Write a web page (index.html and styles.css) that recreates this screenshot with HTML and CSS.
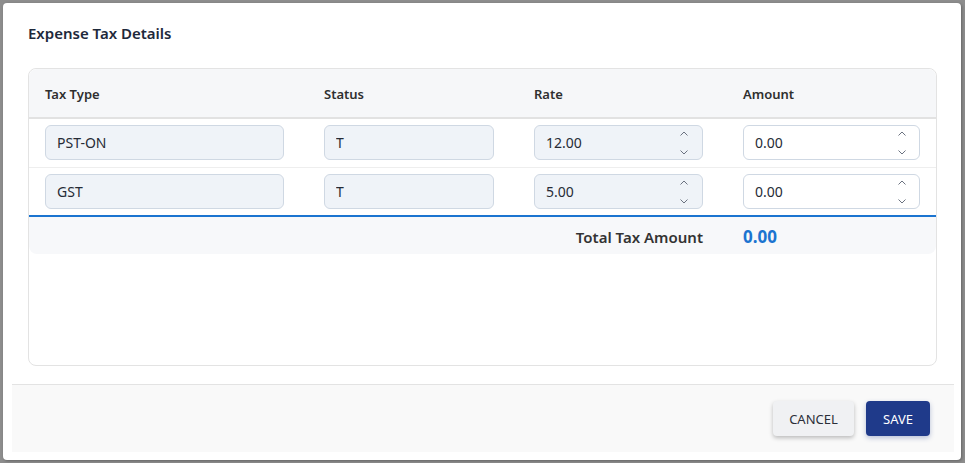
FILE: index.html
```html
<!DOCTYPE html>
<html lang="en">
<head>
  <meta charset="UTF-8" />
  <title>Expense Tax Details</title>
  <link rel="stylesheet" href="styles.css">
</head>
<body>

  <div class="dialogo">
    <h2 class="titulo">Expense Tax Details</h2>

    <div class="cartao">
      <div class="linha cabecalho">
        <div class="cel">Tax Type</div>
        <div class="cel">Status</div>
        <div class="cel">Rate</div>
        <div class="cel">Amount</div>
      </div>

      <div class="linha">
        <div class="cel"><input class="campo bloqueado" value="PST-ON" readonly></div>
        <div class="cel"><input class="campo bloqueado" value="T" readonly></div>
        <div class="cel numero">
          <input class="campo bloqueado" value="12.00" readonly>
          <span class="setas"><svg width="10" height="26" viewBox="0 0 10 26"><path d="M1.5 5.5 L5 2 L8.5 5.5 M1.5 20.5 L5 24 L8.5 20.5" fill="none" stroke="#6b7280" stroke-width="1"/></svg></span>
        </div>
        <div class="cel numero">
          <input class="campo" value="0.00">
          <span class="setas"><svg width="10" height="26" viewBox="0 0 10 26"><path d="M1.5 5.5 L5 2 L8.5 5.5 M1.5 20.5 L5 24 L8.5 20.5" fill="none" stroke="#6b7280" stroke-width="1"/></svg></span>
        </div>
      </div>

      <div class="linha">
        <div class="cel"><input class="campo bloqueado" value="GST" readonly></div>
        <div class="cel"><input class="campo bloqueado" value="T" readonly></div>
        <div class="cel numero">
          <input class="campo bloqueado" value="5.00" readonly>
          <span class="setas"><svg width="10" height="26" viewBox="0 0 10 26"><path d="M1.5 5.5 L5 2 L8.5 5.5 M1.5 20.5 L5 24 L8.5 20.5" fill="none" stroke="#6b7280" stroke-width="1"/></svg></span>
        </div>
        <div class="cel numero">
          <input class="campo" value="0.00">
          <span class="setas"><svg width="10" height="26" viewBox="0 0 10 26"><path d="M1.5 5.5 L5 2 L8.5 5.5 M1.5 20.5 L5 24 L8.5 20.5" fill="none" stroke="#6b7280" stroke-width="1"/></svg></span>
        </div>
      </div>

      <div class="linha total">
        <div class="cel rotulo">Total Tax Amount</div>
        <div class="cel valor">0.00</div>
      </div>
    </div>

    <div class="rodape">
      <button class="botao cancelar">CANCEL</button>
      <button class="botao salvar">SAVE</button>
    </div>
  </div>

</body>
</html>
```

FILE: styles.css
```css
body {
  margin: 0;
  padding: 3px;
  background: #8d8d8d;
  font-family: 'Noto Sans', 'Open Sans', sans-serif;
  height: 463px;
  box-sizing: border-box;
  overflow: hidden;
}

.dialogo {
  width: 958px;
  height: 457px;
  background: #fff;
  border-radius: 4px;
  box-shadow: 1px 1px 3px rgba(0,0,0,0.3);
  padding-top: 18px;
  box-sizing: border-box;
}

.titulo {
  margin: 0 0 23px 25px;
  font-size: 15px;
  line-height: 24px;
  font-weight: 600;
  color: #1e293b;
}

.cartao {
  margin: 0 24px 0 25px;
  height: 298px;
  border: 1px solid #e3e3e3;
  border-radius: 8px;
  box-sizing: border-box;
}

.linha {
  display: grid;
  grid-template-columns: 279px 210px 209px 1fr;
  align-items: start;
  height: 49px;
  padding-top: 6px;
  box-sizing: border-box;
  border-bottom: 1px solid #eeeeee;
}

.cel {
  padding: 0 24px 0 16px;
}

.cel:last-child {
  padding-right: 16px;
}

.cabecalho {
  height: 50px;
  padding-top: 0;
  align-items: center;
  background: #f6f7f9;
  border-bottom: 2px solid #e2e2e2;
  border-radius: 8px 8px 0 0;
  font-size: 13px;
  font-weight: 600;
  color: #2f2f2f;
}

.cabecalho .cel {
  padding-top: 2px;
}

.linha:nth-child(3) {
  height: 49px;
  border-bottom: 2px solid #1b74d0;
}

.campo {
  display: block;
  width: 100%;
  height: 35px;
  box-sizing: border-box;
  padding: 0 11px;
  font-family: inherit;
  font-size: 14px;
  color: #262b36;
  background: #fff;
  border: 1px solid #cfd8e3;
  border-radius: 6px;
  outline: none;
}

.bloqueado {
  background: #eff3f8;
}

.numero {
  position: relative;
}

.setas {
  position: absolute;
  top: 50%;
  margin-top: -13px;
  right: 38px;
  height: 26px;
}

.cel:last-child .setas {
  right: 29px;
}

.setas svg {
  display: block;
}

.total {
  grid-template-columns: 698px 1fr;
  align-items: center;
  height: 37px;
  padding-top: 2px;
  background: #f7f8fa;
  border-bottom: none;
  border-radius: 0 0 8px 8px;
}

.rotulo {
  text-align: right;
  font-size: 15px;
  font-weight: 600;
  color: #333;
}

.valor {
  font-size: 17px;
  font-weight: 700;
  color: #1b74d0;
}

.rodape {
  margin: 18px 7px 0 9px;
  height: 68px;
  background: #f9f9f9;
  border-top: 1px solid #e3e3e3;
  display: flex;
  justify-content: flex-end;
  align-items: flex-start;
  gap: 12px;
  padding: 16px 24px 0 0;
  box-sizing: border-box;
}

.botao {
  height: 35px;
  border: none;
  border-radius: 4px;
  font-family: inherit;
  font-size: 13px;
  cursor: pointer;
}

.cancelar {
  width: 81px;
  background: #f0f1f3;
  color: #2b2f38;
  box-shadow: 0 2px 4px rgba(0,0,0,0.25);
}

.salvar {
  width: 64px;
  background: #1f3a8a;
  color: #fff;
  box-shadow: 0 2px 5px rgba(31,58,138,0.3);
}
```
